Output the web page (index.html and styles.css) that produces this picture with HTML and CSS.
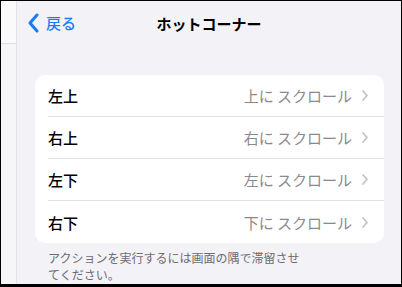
FILE: index.html
```html
<!DOCTYPE html>
<html>
	<head>
		<meta charset="utf-8">
		<link rel="stylesheet" href="styles.css">
	</head>
	<body>
		<div class="frame">
			<div class="sidebar">
				<div class="sidebar-top"></div>
			</div>
			<div class="main">
				<div class="navbar">
					<div class="back">
						<svg width="12" height="20" viewBox="0 0 12 20">
							<polyline points="10,2 3,10 10,18" fill="none" stroke="#1a7cf5" stroke-width="3" stroke-linecap="round" stroke-linejoin="round"/>
						</svg>
						<span>戻る</span>
					</div>
					<div class="title">ホットコーナー</div>
				</div>

				<div class="card">
					<div class="row">
						<span class="label">左上</span>
						<span class="value">上に スクロール</span>
						<svg class="chev" width="8" height="13" viewBox="0 0 8 13"><polyline points="2,2 6,6.5 2,11" fill="none" stroke="#c4c4c7" stroke-width="1.8" stroke-linecap="round" stroke-linejoin="round"/></svg>
					</div>
					<div class="row">
						<span class="label">右上</span>
						<span class="value">右に スクロール</span>
						<svg class="chev" width="8" height="13" viewBox="0 0 8 13"><polyline points="2,2 6,6.5 2,11" fill="none" stroke="#c4c4c7" stroke-width="1.8" stroke-linecap="round" stroke-linejoin="round"/></svg>
					</div>
					<div class="row">
						<span class="label">左下</span>
						<span class="value">左に スクロール</span>
						<svg class="chev" width="8" height="13" viewBox="0 0 8 13"><polyline points="2,2 6,6.5 2,11" fill="none" stroke="#c4c4c7" stroke-width="1.8" stroke-linecap="round" stroke-linejoin="round"/></svg>
					</div>
					<div class="row">
						<span class="label">右下</span>
						<span class="value">下に スクロール</span>
						<svg class="chev" width="8" height="13" viewBox="0 0 8 13"><polyline points="2,2 6,6.5 2,11" fill="none" stroke="#c4c4c7" stroke-width="1.8" stroke-linecap="round" stroke-linejoin="round"/></svg>
					</div>
				</div>

				<p class="footer">アクションを実行するには画面の隅で滞留させてください。</p>
			</div>
		</div>
	</body>
</html>
```

FILE: styles.css
```css
html, body {
	margin: 0;
	padding: 0;
}

body {
	font-family: "Noto Sans CJK JP", "Noto Sans", sans-serif;
}

.frame {
	width: 402px;
	height: 287px;
	box-sizing: border-box;
	border: 1px solid #000;
	border-bottom-width: 3px;
	display: flex;
	overflow: hidden;
	background-color: #f2f2f7;
}

.sidebar {
	width: 15px;
	flex: none;
	background-color: #f6f6f8;
	border-right: 1px solid #e3e3e6;
}

.sidebar-top {
	height: 42px;
	background-color: #fafafa;
	border-bottom: 1px solid #dcdcdf;
}

.main {
	flex: 1;
	display: flex;
	flex-direction: column;
}

.navbar {
	height: 44px;
	position: relative;
	display: flex;
	align-items: center;
	justify-content: center;
}

.back {
	position: absolute;
	left: 10px;
	top: 12px;
	display: flex;
	align-items: center;
	gap: 7px;
	color: #1a7cf5;
	font-size: 15px;
	font-weight: 500;
	line-height: 20px;
}

.back svg {
	display: block;
}

.title {
	font-size: 15px;
	font-weight: 700;
	color: #000;
	margin-top: 1px;
}

.card {
	margin: 30px 17px 0 18px;
	background-color: #fff;
	border-radius: 10px;
	padding-left: 13px;
}

.row {
	height: 41px;
	display: flex;
	align-items: center;
	border-bottom: 1px solid #e1e1e4;
	padding-right: 15px;
}

.row:last-child {
	height: 42px;
	border-bottom: none;
}

.label {
	flex: 1;
	font-size: 15px;
	font-weight: 500;
	color: #000;
}

.value {
	font-size: 15px;
	color: #8a8a8e;
	margin-right: 9px;
}

.chev {
	display: block;
}

.footer {
	margin: 6px 0 0 31px;
	width: 258px;
	font-size: 12px;
	line-height: 17px;
	color: #6d6d72;
}
```
